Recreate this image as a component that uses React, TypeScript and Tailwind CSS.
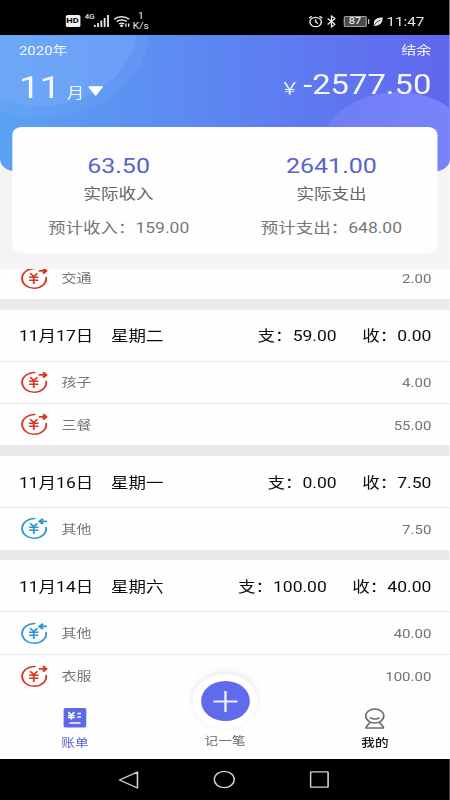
import React from "react";

type Kind = "out" | "in";
type Entry = { kind: Kind; name: string; amount: string };
type Day = { date: string; week: string; spend: string; income: string; entries: Entry[] };

const days: Day[] = [
  {
    date: "11月17日",
    week: "星期二",
    spend: "59.00",
    income: "0.00",
    entries: [
      { kind: "out", name: "孩子", amount: "4.00" },
      { kind: "out", name: "三餐", amount: "55.00" },
    ],
  },
  {
    date: "11月16日",
    week: "星期一",
    spend: "0.00",
    income: "7.50",
    entries: [{ kind: "in", name: "其他", amount: "7.50" }],
  },
  {
    date: "11月14日",
    week: "星期六",
    spend: "100.00",
    income: "40.00",
    entries: [
      { kind: "in", name: "其他", amount: "40.00" },
      { kind: "out", name: "衣服", amount: "100.00" },
    ],
  },
];

function MoneyIcon({ kind }: { kind: Kind }) {
  const color = kind === "out" ? "#d63a26" : "#2f98d0";
  return (
    <svg className="h-[23px] w-[22px] shrink-0" viewBox="0 0 22 23" fill="none" stroke={color} strokeWidth="1.6">
      <path d="M11.5 1.5A9.9 9.9 0 1 0 20.9 10.600" strokeLinecap="round" />
      {kind === "out" ? (
        <path d="M14.800 3.900h6M18.200 1.300l2.900 2.600-2.900 2.600" strokeWidth="1.900" />
      ) : (
        <path d="M21.500 4.400h-6M18.300 1.800l-2.900 2.600 2.900 2.600" strokeWidth="1.900" />
      )}
      <path d="M7.700 6.300l3 3.300 3-3.300M6.800 10.200h7.800M6.800 13.200h7.800M10.700 9.600v7.400" strokeWidth="1.500" />
    </svg>
  );
}

function Row({ entry }: { entry: Entry }) {
  return (
    <div className="flex h-[41.25px] shrink-0 items-center bg-[#fefefe] pl-[16.500px] pr-[15.3px] text-[12.3px] text-[#747474]">
      <MoneyIcon kind={entry.kind} />
      <span className="ml-[12px] flex-1 pt-[2px]">{entry.name}</span>
      <span className="pt-[2px]">{entry.amount}</span>
    </div>
  );
}

function DaySection({ day }: { day: Day }) {
  return (
    <section className="group">
      <div className="h-[10.9px] bg-[#e9e9e9]" />
      <div className="flex h-[51px] items-center bg-[#fefefe] pl-[15.5px] pr-[15.3px] pt-[3px] text-[14.36px] text-[#0c0c0c]">
        <span>{day.date}</span>
        <span className="ml-[14.5px] flex-1">{day.week}</span>
        <span>支：{day.spend}</span>
        <span className="ml-[21px]">收：{day.income}</span>
      </div>
      {day.entries.map((entry) => (
        <div key={entry.name} className="border-t border-[#e9e9ea] group-last:last:pt-[1.300px]">
          <Row entry={entry} />
        </div>
      ))}
    </section>
  );
}

function Summary({ total, title, plan }: { total: string; title: string; plan: string }) {
  return (
    <div className="flex flex-1 flex-col items-center">
      <span className="mt-[25.500px] text-[20.5px] leading-[26px] text-[#5762cd]">{total}</span>
      <span className="mt-[6px] text-[14.36px] leading-[20px] text-[#666]">{title}</span>
      <span className="mt-[14px] text-[14.36px] leading-[20px] text-[#777]">{plan}</span>
    </div>
  );
}

function StatusBar() {
  return (
    <div className="flex h-[35px] shrink-0 items-center bg-black pl-[53.5px] pr-[21px] pt-[7px] text-[#e8e8e8]">
      <span className="flex h-[12px] w-[12px] items-center justify-center rounded-[1.5px] bg-[#f0f0f0] text-[7.5px] font-bold text-black">HD</span>
      <span className="ml-[4px] -mt-[7px] w-[7.500px] text-[6.500px] font-medium leading-[7px]">4G</span>
      <svg className="h-[12px] w-[12.5px]" viewBox="0 0 12.5 12" fill="#e8e8e8">
        <rect x="0" y="10" width="1.5" height="2" />
        <rect x="2.7" y="8" width="1.5" height="4" />
        <rect x="5.4" y="5.5" width="1.5" height="6.5" />
        <rect x="8.1" y="3" width="1.5" height="9" />
        <rect x="10.9" y="0" width="1.5" height="12" />
      </svg>
      <svg className="ml-[3px] h-[12px] w-[14px]" viewBox="0 0 14 12" fill="none" stroke="#e8e8e8" strokeWidth="1.4">
        <path d="M.6 4.2a9 9 0 0 1 12.4 0M2.7 6.6a6 6 0 0 1 8.2 0M4.8 9a3 3 0 0 1 4 0" />
        <circle cx="6.8" cy="10.7" r=".6" fill="#e8e8e8" />
        <path d="M10.3 8.4v3.4M12.6 8.4v3.4" strokeWidth="1.1" />
      </svg>
      <span className="ml-[2.500px] flex w-[13px] flex-col items-center text-[8.4px] leading-[10px]">
        <span>1</span>
        <span>K/s</span>
      </span>
      <span className="flex-1" />
      <svg className="h-[13px] w-[12px]" viewBox="0 0 12 13" fill="none" stroke="#e8e8e8" strokeWidth="1.2">
        <circle cx="6" cy="7" r="4.7" />
        <path d="M6 4.2V7l2 1.6M.5 3.2l2.3-2M11.5 3.2l-2.3-2" />
      </svg>
      <svg className="ml-[3px] h-[13px] w-[8px]" viewBox="0 0 8 13" fill="none" stroke="#e8e8e8" strokeWidth="1.1">
        <path d="M.8 3.5l6 5.8L4 12V1l2.8 2.7-6 5.8" />
      </svg>
      <span className="ml-[5.500px] flex h-[11px] w-[19.500px] items-center justify-center rounded-[1.5px] border border-[#a0a0a0] bg-[#4a4a4a] pt-px text-[9px] font-medium leading-none">87</span>
      <span className="ml-[.5px] h-[5px] w-[1.5px] bg-[#d0d0d0]" />
      <svg className="ml-[2.5px] h-[9px] w-[8.5px]" viewBox="0 0 8.5 9">
        <path d="M8.3.3C4 .6.3 2 .8 7.4L.2 8.7h1C5.500 9 8 5.500 8.300.3z" fill="#e8e8e8" />
        <path d="M.8 8.200Q3 4.500 6 3" stroke="#000" strokeWidth=".6" fill="none" />
      </svg>
      <span className="ml-[3px] pt-[2px] text-[12.500px] leading-none">11:47</span>
    </div>
  );
}

function Header() {
  return (
    <header className="relative h-[233.5px] shrink-0 bg-[#f5f3f5]">
      <div className="absolute inset-x-0 top-0 h-[136px] overflow-hidden rounded-b-[12px] bg-linear-to-r from-[#5ba3f2] via-[#5c84f2] to-[#6166ee]">
        <div className="absolute -left-[57px] -top-[103px] h-[186px] w-[180px] rounded-full bg-[#84a8ff]/20" />
        <div className="absolute -left-[46px] -top-[91px] h-[162px] w-[158px] rounded-full bg-[#84b4ff]/30" />
        <div className="absolute left-[260px] top-[57px] h-[132px] w-[132px] rounded-full bg-linear-to-r from-[#6e7ef6] to-[#7b83fa]" />
      </div>
      <div className="relative flex h-[92px] justify-between pl-[15.5px] pr-[15.300px] pt-[7px] text-[#f4f7ff]">
        <div>
          <div className="text-[12.3px] leading-[18px]">2020年</div>
          <div className="mt-[9.500px] flex items-baseline">
            <span className="text-[30.5px] leading-[36px]">11</span>
            <span className="ml-[5px] text-[14.36px]">月</span>
            <svg className="ml-[3px] h-[12px] w-[13px]" viewBox="0 0 13 12">
              <path d="M.9.8h11.200L6.500 9.200z" fill="#fff" stroke="#fff" strokeLinejoin="round" />
            </svg>
          </div>
        </div>
        <div className="text-right">
          <div className="text-[12.3px] leading-[18px]">结余</div>
          <div className="mt-[7px] flex items-baseline leading-[36px]">
            <span className="text-[16px]">￥</span>
            <span className="ml-[3px] text-[26.9px]">-2577.50</span>
          </div>
        </div>
      </div>
      <div className="relative mx-[10px] flex h-[126px] rounded-[8px] bg-[#fefefe]">
        <Summary total="63.50" title="实际收入" plan="预计收入：159.00" />
        <Summary total="2641.00" title="实际支出" plan="预计支出：648.00" />
      </div>
    </header>
  );
}

function TabBar() {
  return (
    <nav className="relative z-10 flex h-[62px] shrink-0 bg-[#fefefe]">
      <div className="flex flex-1 flex-col items-center pt-[11px]">
        <svg className="h-[20px] w-[19px]" viewBox="0 0 19 20">
          <rect width="19" height="19.500" rx="1.800" fill="#5f69e8" />
          <path d="M4 4l2.500 3L9 4M3.800 7.500h5.400M3.800 9.500h5.400M6.500 7v4.500M11.500 5.500h3M11.500 9h3M5 15h9" stroke="#fff" strokeWidth="1.300" fill="none" />
        </svg>
        <span className="mt-[8px] text-[11.200px] leading-[16px] text-[#5762cd]">账单</span>
      </div>
      <div className="flex flex-1 flex-col items-center">
        <div className="-mt-[23px] flex h-[54px] w-[53px] shrink-0 items-center justify-center rounded-full bg-white shadow-[0_-2px_6px_1px_rgba(0,0,0,0.07)]">
          <div className="flex h-[40px] w-[40px] items-center justify-center rounded-full bg-[#606bec]">
            <svg className="h-[21px] w-[20px]" viewBox="0 0 20 21" stroke="#f0f1ff" strokeWidth="1.900">
              <path d="M0 10.500h20M10 0v21" />
            </svg>
          </div>
        </div>
        <span className="mt-[6px] text-[11.200px] leading-[16px] text-[#666]">记一笔</span>
      </div>
      <div className="flex flex-1 flex-col items-center pt-[11px]">
        <svg className="h-[22px] w-[17px]" viewBox="0 0 17 22" fill="none" stroke="#6c6c6c" strokeWidth="1.500" strokeLinejoin="round">
          <ellipse cx="8.500" cy="8" rx="7.400" ry="7.100" />
          <path d="M4.600 9.600q3.900 3 7.800 0M4.300 14.200c0 2-2.800 3.300-3 5.800h14.400c-.2-2.500-3-3.800-3-5.800" />
        </svg>
        <span className="mt-[6px] text-[11.200px] font-medium leading-[16px] text-[#161616]">我的</span>
      </div>
    </nav>
  );
}

function SystemNav() {
  return (
    <div className="relative z-20 flex h-[41px] shrink-0 items-center justify-center gap-[61px] bg-black pr-[2px]">
      <svg className="h-[20px] w-[17px]" viewBox="0 0 17 20" fill="none" stroke="#d4d4d4" strokeWidth="1.300">
        <path d="M15.800 2v16L1 10z" strokeLinejoin="round" />
      </svg>
      <svg className="h-[19px] w-[18px]" viewBox="0 0 18 19" fill="none" stroke="#d4d4d4" strokeWidth="1.300">
        <circle cx="9" cy="9.500" r="8.200" />
      </svg>
      <svg className="h-[17px] w-[16px]" viewBox="0 0 16 17" fill="none" stroke="#d4d4d4" strokeWidth="1.300">
        <rect x=".8" y=".8" width="14.400" height="15.400" rx=".5" />
      </svg>
    </div>
  );
}

export default function App() {
  return (
    <div className="h-[800px] w-[450px] overflow-hidden bg-white">
      <div className="flex h-[800px] w-[369.23px] origin-left scale-x-[1.21875] flex-col overflow-hidden whitespace-nowrap font-[Roboto,'Noto_Sans_CJK_SC',sans-serif]">
        <StatusBar />
        <Header />
        <main className="min-h-0 flex-1 overflow-hidden bg-[#fefefe]">
          <div className="flex h-[30.5px] flex-col justify-end overflow-hidden">
            <Row entry={{ kind: "out", name: "交通", amount: "2.00" }} />
          </div>
          {days.map((day) => (
            <DaySection key={day.date} day={day} />
          ))}
        </main>
        <TabBar />
        <SystemNav />
      </div>
    </div>
  );
}
